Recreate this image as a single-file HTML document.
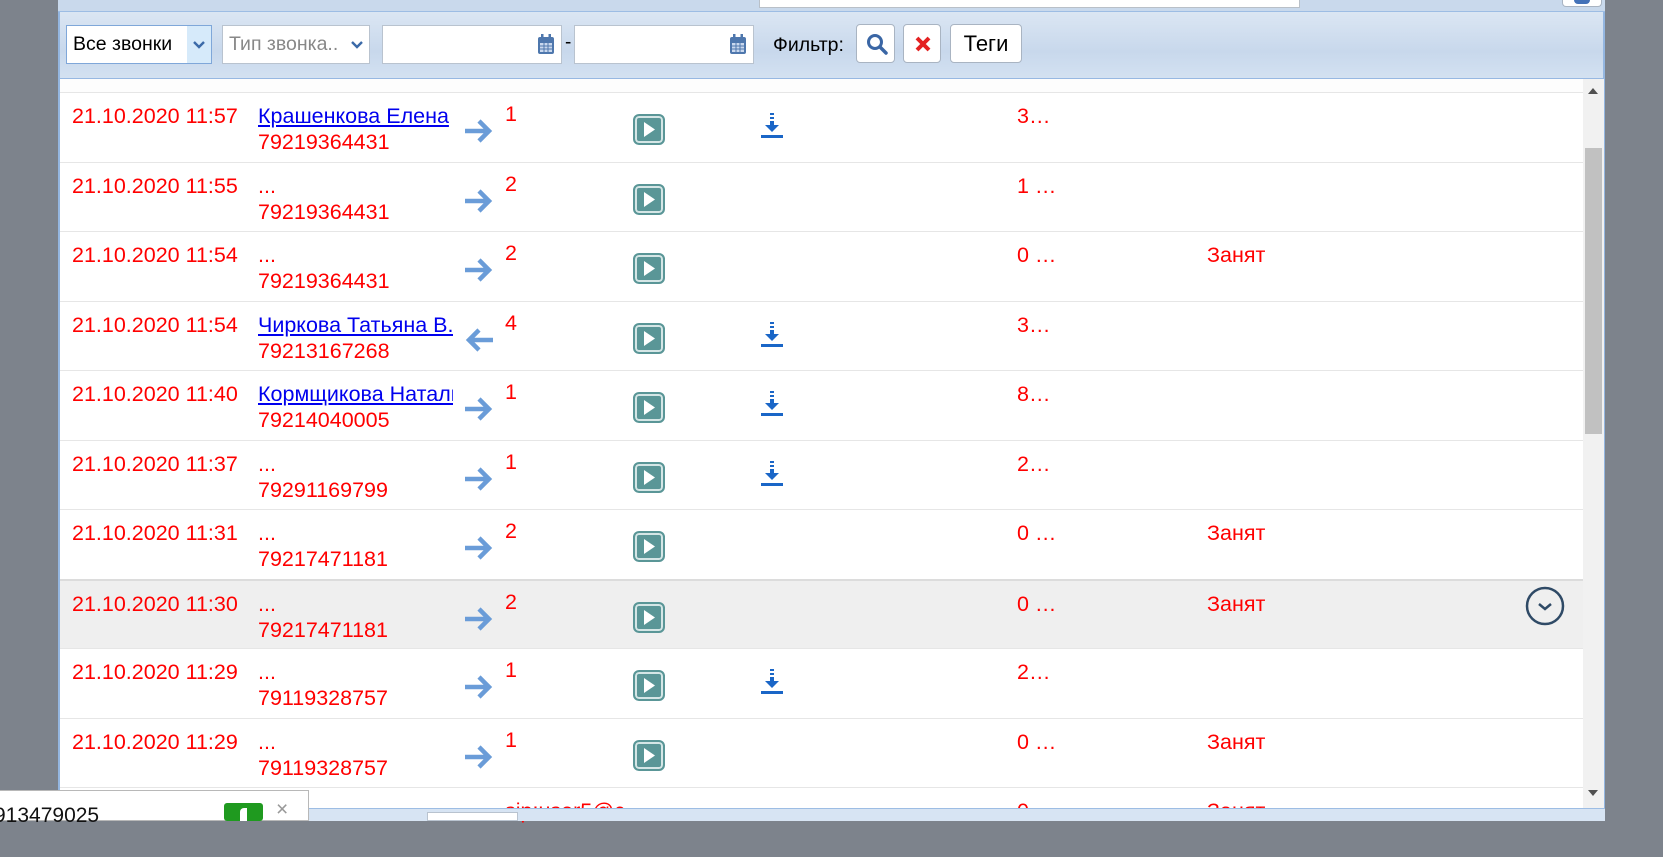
<!DOCTYPE html>
<html><head><meta charset="utf-8"><style>
*{margin:0;padding:0;box-sizing:border-box}
body{width:1663px;height:821px;overflow:hidden;background:#7d838c;font-family:"Liberation Sans",Arial,sans-serif;position:relative}
.abs{position:absolute}
#panel{left:58px;top:0;width:1547px;height:821px;background:#fff;border-right:2px solid #94b6e0;border-left:2px solid #94b6e0}
#top{left:58px;top:0;width:1547px;height:12px;background:#c9d9ec;border-bottom:1px solid #9dbde4}
#tb{left:60px;top:12px;width:1543px;height:67px;background:linear-gradient(#dbe6f3,#c8d8ec 60%,#d3e1f1);border-bottom:1px solid #97b8e2}
.inp{background:#fff;border:1px solid #b9c3cf;height:39px;top:25px}
.btn{background:#fff;border:1px solid #a9b4c2;border-radius:4px;top:24px;height:39px}
.row{position:absolute;left:60px;width:1523px;height:70px;border-top:1px solid #e6e6e6;font-size:21.5px;color:#f00}
.row div,.row svg{position:absolute}
.d{left:12px;top:11px}
.n{left:198px;top:11px;width:195px;white-space:nowrap;overflow:hidden}
.n a{color:#00e;text-decoration:underline}
.p{left:198px;top:37px}
.c{left:445px;top:9px}
.e{left:957px;top:11px}
.s{left:1147px;top:11px}
.ar{left:403px;top:24px}
.pl{left:573px;top:21px;width:32px;height:31px;background:#5a9697;border-radius:6px;border:2px solid #5a9697;box-shadow:inset 0 0 0 2px #d5e6e6}
.dl{left:700px;top:20px}
.cal{position:absolute;right:6px;top:8px}
</style></head><body>
<div id="panel" class="abs"></div>
<div id="top" class="abs"></div>
<div class="abs" style="left:759px;top:0;width:541px;height:8px;background:#fff;border:1px solid #b9c0c8;border-top:none"></div>
<div class="abs" style="left:1562px;top:0;width:40px;height:7px;background:#fff;border:1px solid #a9b4c2;border-top:none;border-radius:0 0 4px 4px"><div style="margin:0 auto;width:16px;height:4px;background:#4472b8;border-radius:0 0 4px 4px"></div></div>
<div id="tb" class="abs"></div>
<div class="abs inp" style="left:66px;width:146px;border-color:#7fa7d9;font-size:19.5px;padding:7px 0 0 6px">Все звонки<div class="abs" style="right:0;top:0;width:24px;height:37px;background:#d6eafa"></div><svg class="abs" style="right:6px;top:15px" width="12" height="9"><path d="M1 1l5 5 5-5" stroke="#3b6aa8" stroke-width="2.4" fill="none"/></svg></div>
<div class="abs inp" style="left:222px;width:148px;font-size:19.5px;color:#888;padding:7px 0 0 6px">Тип звонка..<svg class="abs" style="right:6px;top:15px" width="12" height="9"><path d="M1 1l5 5 5-5" stroke="#3b6aa8" stroke-width="2.4" fill="none"/></svg></div>
<div class="abs inp" style="left:382px;width:180px"><svg class="cal" width="18" height="21"><rect x="1" y="3" width="16" height="17" rx="2" fill="#4e77ad"/><rect x="4" y="0" width="2.5" height="5" fill="#4e77ad"/><rect x="11.5" y="0" width="2.5" height="5" fill="#4e77ad"/><rect x="3" y="9" width="12" height="9" fill="#c9d8ee"/><path d="M3 12h12M3 15h12M7 9v9M11 9v9" stroke="#4e77ad" stroke-width="1"/></svg></div>
<div class="abs" style="left:565px;top:32px;font-size:19px">-</div>
<div class="abs inp" style="left:574px;width:180px"><svg class="cal" width="18" height="21"><rect x="1" y="3" width="16" height="17" rx="2" fill="#4e77ad"/><rect x="4" y="0" width="2.5" height="5" fill="#4e77ad"/><rect x="11.5" y="0" width="2.5" height="5" fill="#4e77ad"/><rect x="3" y="9" width="12" height="9" fill="#c9d8ee"/><path d="M3 12h12M3 15h12M7 9v9M11 9v9" stroke="#4e77ad" stroke-width="1"/></svg></div>
<div class="abs" style="left:773px;top:34px;font-size:19.5px">Фильтр:</div>
<div class="abs btn" style="left:856px;width:39px"><svg class="abs" style="left:9px;top:8px" width="22" height="22"><circle cx="9" cy="9" r="6.5" stroke="#3a66a5" stroke-width="3" fill="none"/><path d="M14 14l6 6" stroke="#3a66a5" stroke-width="3.5" stroke-linecap="round"/></svg></div>
<div class="abs btn" style="left:903px;width:38px"><svg class="abs" style="left:11px;top:11px" width="16" height="16"><path d="M2 2l12 12M14 2L2 14" stroke="#e42222" stroke-width="4"/></svg></div>
<div class="abs btn" style="left:950px;width:72px;font-size:22px;text-align:center;padding-top:6px">Теги</div>
<div class="abs" style="left:60px;top:79px;width:1523px;height:13px;background:#fdfdfd"></div>
<div class="abs" style="left:1583px;top:79px;width:21px;height:729px;background:#f1f1f1"></div>
<div class="abs" style="left:1588px;top:88px;width:0;height:0;border-left:5px solid transparent;border-right:5px solid transparent;border-bottom:6px solid #505050"></div>
<div class="abs" style="left:1585px;top:148px;width:17px;height:286px;background:#c1c1c1"></div>
<div class="abs" style="left:1588px;top:790px;width:0;height:0;border-left:5px solid transparent;border-right:5px solid transparent;border-top:6px solid #505050"></div>

<svg width="0" height="0" style="position:absolute"><defs>
<g id="ra"><path d="M2 14h24M16 4l10 10-10 10" stroke="#6a9cd8" stroke-width="4.5" fill="none"/></g>
<g id="la"><path d="M30 14H6M16 4L6 14l10 10" stroke="#6a9cd8" stroke-width="4.5" fill="none"/></g>
<g id="dlg"><rect x="10" y="0" width="4" height="2" fill="#1a66c7"/><rect x="10" y="4" width="4" height="2" fill="#1a66c7"/><rect x="10" y="8" width="4" height="4" fill="#1a66c7"/><path d="M5 12h14l-7 7z" fill="#1a66c7"/><rect x="1" y="22" width="22" height="3" fill="#1a66c7"/></g>
<g id="tri"><path d="M9 6v15l11-7.5z" fill="#fff"/></g>
</defs></svg>

<div class="row" style="top:92px"><div class="d">21.10.2020 11:57</div><div class="n"><a>Крашенкова Елена</a></div><div class="p">79219364431</div><svg class="ar" width="32" height="28"><use href="#ra"/></svg><div class="c">1</div><div class="pl"><svg width="28" height="27" style="left:0;top:0"><use href="#tri"/></svg></div><svg class="dl" width="24" height="26"><use href="#dlg"/></svg><div class="e">3…</div></div>
<div class="row" style="top:161.5px"><div class="d">21.10.2020 11:55</div><div class="n">...</div><div class="p">79219364431</div><svg class="ar" width="32" height="28"><use href="#ra"/></svg><div class="c">2</div><div class="pl"><svg width="28" height="27" style="left:0;top:0"><use href="#tri"/></svg></div><div class="e">1 …</div></div>
<div class="row" style="top:231px"><div class="d">21.10.2020 11:54</div><div class="n">...</div><div class="p">79219364431</div><svg class="ar" width="32" height="28"><use href="#ra"/></svg><div class="c">2</div><div class="pl"><svg width="28" height="27" style="left:0;top:0"><use href="#tri"/></svg></div><div class="e">0 …</div><div class="s">Занят</div></div>
<div class="row" style="top:300.5px"><div class="d">21.10.2020 11:54</div><div class="n"><a>Чиркова Татьяна В.</a></div><div class="p">79213167268</div><svg class="ar" width="32" height="28"><use href="#la"/></svg><div class="c">4</div><div class="pl"><svg width="28" height="27" style="left:0;top:0"><use href="#tri"/></svg></div><svg class="dl" width="24" height="26"><use href="#dlg"/></svg><div class="e">3…</div></div>
<div class="row" style="top:370px"><div class="d">21.10.2020 11:40</div><div class="n"><a>Кормщикова Наталья</a></div><div class="p">79214040005</div><svg class="ar" width="32" height="28"><use href="#ra"/></svg><div class="c">1</div><div class="pl"><svg width="28" height="27" style="left:0;top:0"><use href="#tri"/></svg></div><svg class="dl" width="24" height="26"><use href="#dlg"/></svg><div class="e">8…</div></div>
<div class="row" style="top:439.5px"><div class="d">21.10.2020 11:37</div><div class="n">...</div><div class="p">79291169799</div><svg class="ar" width="32" height="28"><use href="#ra"/></svg><div class="c">1</div><div class="pl"><svg width="28" height="27" style="left:0;top:0"><use href="#tri"/></svg></div><svg class="dl" width="24" height="26"><use href="#dlg"/></svg><div class="e">2…</div></div>
<div class="row" style="top:509px"><div class="d">21.10.2020 11:31</div><div class="n">...</div><div class="p">79217471181</div><svg class="ar" width="32" height="28"><use href="#ra"/></svg><div class="c">2</div><div class="pl"><svg width="28" height="27" style="left:0;top:0"><use href="#tri"/></svg></div><div class="e">0 …</div><div class="s">Занят</div></div>
<div class="row" style="top:578.5px;background:#efefef;border-top:2px solid #dcdcdc"><div class="d">21.10.2020 11:30</div><div class="n">...</div><div class="p">79217471181</div><svg class="ar" width="32" height="28"><use href="#ra"/></svg><div class="c">2</div><div class="pl"><svg width="28" height="27" style="left:0;top:0"><use href="#tri"/></svg></div><div class="e">0 …</div><div class="s">Занят</div><svg style="left:1465px;top:5px" width="40" height="40"><circle cx="20" cy="20" r="18" stroke="#2f4a66" stroke-width="2.5" fill="none"/><path d="M14 18l6 5 6-5" stroke="#2f4a66" stroke-width="2.5" fill="none"/></svg></div>
<div class="row" style="top:648px"><div class="d">21.10.2020 11:29</div><div class="n">...</div><div class="p">79119328757</div><svg class="ar" width="32" height="28"><use href="#ra"/></svg><div class="c">1</div><div class="pl"><svg width="28" height="27" style="left:0;top:0"><use href="#tri"/></svg></div><svg class="dl" width="24" height="26"><use href="#dlg"/></svg><div class="e">2…</div></div>
<div class="row" style="top:717.5px"><div class="d">21.10.2020 11:29</div><div class="n">...</div><div class="p">79119328757</div><svg class="ar" width="32" height="28"><use href="#ra"/></svg><div class="c">1</div><div class="pl"><svg width="28" height="27" style="left:0;top:0"><use href="#tri"/></svg></div><div class="e">0 …</div><div class="s">Занят</div></div>
<div class="row" style="top:787px"><div class="c" style="top:11px">sip:user5@c</div><div class="e">0 …</div><div class="s">Занят</div></div>

<div class="abs" style="left:309px;top:808px;width:1296px;height:13px;background:#d7e4f3;border-top:1px solid #9dbde4"></div>
<div class="abs" style="left:427px;top:812px;width:91px;height:9px;background:#fff;border:1px solid #b9c3cf"></div>
<div class="abs" style="left:0;top:790px;width:309px;height:31px;background:#fff;border:1px solid #b8b8b8;border-left:none"></div>
<div class="abs" style="left:-6px;top:804px;font-size:21px;color:#111">913479025</div>
<div class="abs" style="left:224px;top:803px;width:39px;height:18px;background:#1f9a1f;border-radius:3px"><div style="position:absolute;left:16px;top:5px;width:7px;height:13px;background:#fff;border-radius:4px 0 0 0"></div></div>
<div class="abs" style="left:276px;top:798px;font-size:21px;color:#999">×</div>
</body></html>
